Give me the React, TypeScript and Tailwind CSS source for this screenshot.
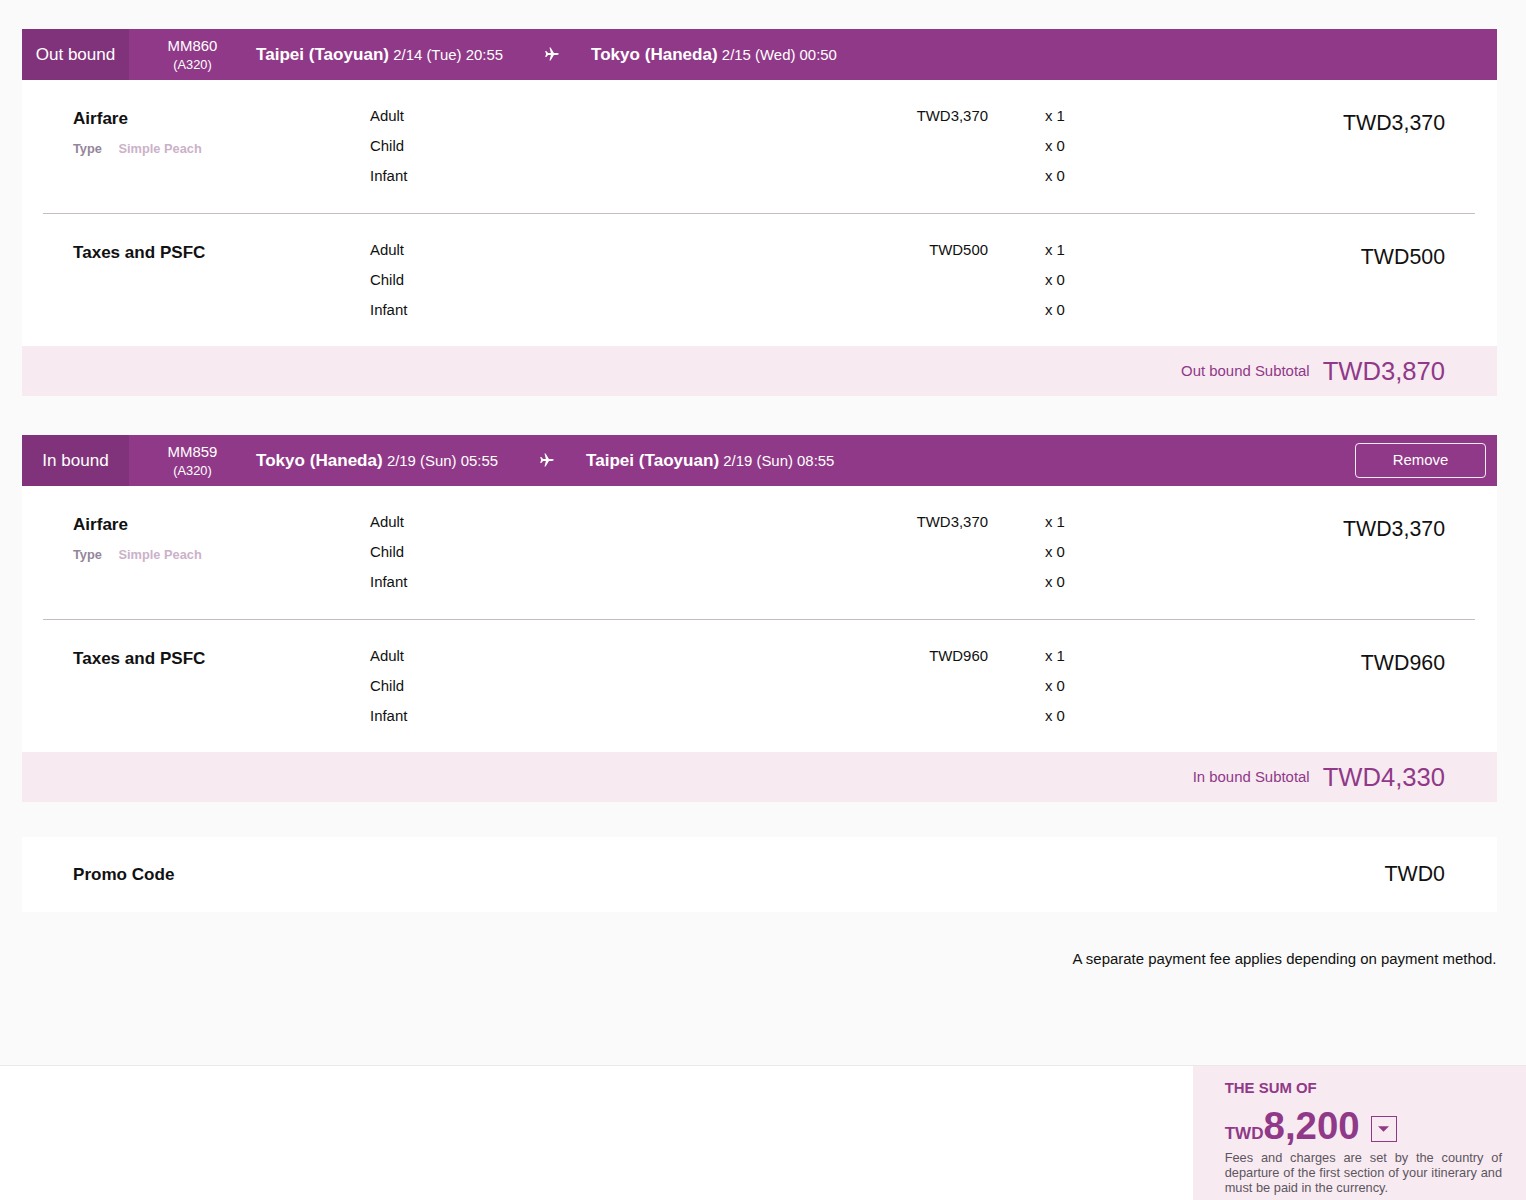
type Fee = { title: string; fareType?: string; amount: string };

type Flight = {
  label: string;
  flightNo: string;
  aircraft: string;
  from: string;
  departs: string;
  to: string;
  arrives: string;
  removable?: boolean;
  fees: Fee[];
  subtotal: string;
};

const flights: Flight[] = [
  {
    label: "Out bound",
    flightNo: "MM860",
    aircraft: "(A320)",
    from: "Taipei (Taoyuan)",
    departs: "2/14 (Tue) 20:55",
    to: "Tokyo (Haneda)",
    arrives: "2/15 (Wed) 00:50",
    fees: [
      { title: "Airfare", fareType: "Simple Peach", amount: "TWD3,370" },
      { title: "Taxes and PSFC", amount: "TWD500" },
    ],
    subtotal: "TWD3,870",
  },
  {
    label: "In bound",
    flightNo: "MM859",
    aircraft: "(A320)",
    from: "Tokyo (Haneda)",
    departs: "2/19 (Sun) 05:55",
    to: "Taipei (Taoyuan)",
    arrives: "2/19 (Sun) 08:55",
    removable: true,
    fees: [
      { title: "Airfare", fareType: "Simple Peach", amount: "TWD3,370" },
      { title: "Taxes and PSFC", amount: "TWD960" },
    ],
    subtotal: "TWD4,330",
  },
];

function Plane() {
  return (
    <svg viewBox="0 0 14 14" className="mr-8 mb-[2px] ml-[42px] h-[14px] w-[14px] shrink-0" fill="white">
      <path d="M0.2 3.9H1.2L3.1 6.1H5.9L4.5 0.5H5.6L8.9 6.1H11.8Q13.8 6.3 13.9 7Q13.8 7.7 11.8 7.9H8.9L5.6 13.5H4.5L5.9 7.9H3.1L1.2 10.1H0.2L1.1 7Z" />
    </svg>
  );
}

function FeeRow({ fee, last }: { fee: Fee; last: boolean }) {
  return (
    <div className={last ? "flex h-[131.5px] pt-[21px]" : "flex h-[134px] border-b border-[#c5bcc4] pt-[21px]"}>
      <div className="w-[297px] pl-[30px]">
        <h3 className="mt-[6px] text-[17.07px] leading-6 font-bold">{fee.title}</h3>
        {fee.fareType && (
          <p className="mt-2 flex gap-[16.6px] text-[12.8px] leading-5 font-bold">
            <span className="text-[#94869a]">Type</span>
            <span className="text-[#cbb2c9]">{fee.fareType}</span>
          </p>
        )}
      </div>
      <div className="w-[400px] pl-[30px] text-[14.93px] leading-[30px]">
        <p>Adult</p>
        <p>Child</p>
        <p>Infant</p>
      </div>
      <p className="w-[248px] text-right text-[14.93px] leading-[30px]">{fee.amount}</p>
      <div className="pl-[57px] text-[14.93px] leading-[30px]">
        <p>x 1</p>
        <p>x 0</p>
        <p>x 0</p>
      </div>
      <p className="mt-[7px] ml-auto pr-[30px] text-[21.33px] leading-[30px]">{fee.amount}</p>
    </div>
  );
}

function FlightSection({ flight }: { flight: Flight }) {
  return (
    <section className="bg-white">
      <header className="flex h-[51px] items-center bg-[#903988] text-white">
        <div className="flex h-full w-[107px] items-center justify-center bg-[#80337a] text-[17.07px]">
          {flight.label}
        </div>
        <div className="w-[127px] text-center">
          <p className="mt-px text-[14.93px] leading-[19px]">{flight.flightNo}</p>
          <p className="text-[12.8px] leading-[19px]">{flight.aircraft}</p>
        </div>
        <p className="whitespace-nowrap text-[14.93px] leading-6">
          <b className="text-[17.07px]">{flight.from}</b> {flight.departs}
        </p>
        <Plane />
        <p className="whitespace-nowrap text-[14.93px] leading-6">
          <b className="text-[17.07px]">{flight.to}</b> {flight.arrives}
        </p>
        {flight.removable && (
          <button className="mr-[11px] ml-auto h-[35px] w-[131px] rounded border border-white/90 text-[14.93px]">
            Remove
          </button>
        )}
      </header>
      <div className="pr-[22px] pl-[21px]">
        {flight.fees.map((fee, i) => (
          <FeeRow key={fee.title} fee={fee} last={i === flight.fees.length - 1} />
        ))}
      </div>
      <footer className="flex h-[50.5px] items-center justify-end gap-[13px] bg-[#f7ebf1] pr-[52px] text-[#903988]">
        <span className="text-[14.93px]">{flight.label} Subtotal</span>
        <span className="text-[25.6px]">{flight.subtotal}</span>
      </footer>
    </section>
  );
}

export default function App() {
  return (
    <div className="flex h-[1200px] w-[1526px] flex-col overflow-hidden bg-[#fafafa] font-['Liberation_Sans',Arial,sans-serif] text-[#111]">
      <main className="flex-1 pt-[29px] pr-[29px] pl-[22px]">
        <div className="flex flex-col gap-[39px]">
          {flights.map((flight) => (
            <FlightSection key={flight.label} flight={flight} />
          ))}
        </div>
        <section className="mt-[35px] flex h-[75px] items-center justify-between bg-white pr-[52px] pl-[51px]">
          <h3 className="text-[17.07px] font-bold">Promo Code</h3>
          <span className="text-[21.33px]">TWD0</span>
        </section>
        <p className="mt-[35px] pr-[0.5px] text-right text-[14.96px] leading-6">
          A separate payment fee applies depending on payment method.
        </p>
      </main>
      <div className="flex h-[135px] justify-end border-t border-[#ebe8ea] bg-white">
        <aside className="w-[333px] bg-[#f7ebf1] pt-[9.5px] pr-6 pl-[31.7px] text-[#903988]">
          <h2 className="text-[14.93px] leading-6 font-bold">THE SUM OF</h2>
          <div className="flex h-[50px] items-center">
            <p className="mt-[10px] text-[38.4px] leading-[48px] font-bold">
              <span className="text-[17.07px]">TWD</span>8,200
            </p>
            <button className="mt-[8px] ml-[11px] flex h-[26px] w-[26px] items-center justify-center border border-[#903988]">
              <svg viewBox="0 0 12 6" className="h-[6px] w-[11px]" fill="currentColor">
                <path d="M0 0H12L6 6Z" />
              </svg>
            </button>
          </div>
          <p className="text-justify text-[12.8px] leading-[15px] text-[#5d5560]">
            Fees and charges are set by the country of departure of the first section of your itinerary and must be
            paid in the currency.
          </p>
        </aside>
      </div>
    </div>
  );
}
